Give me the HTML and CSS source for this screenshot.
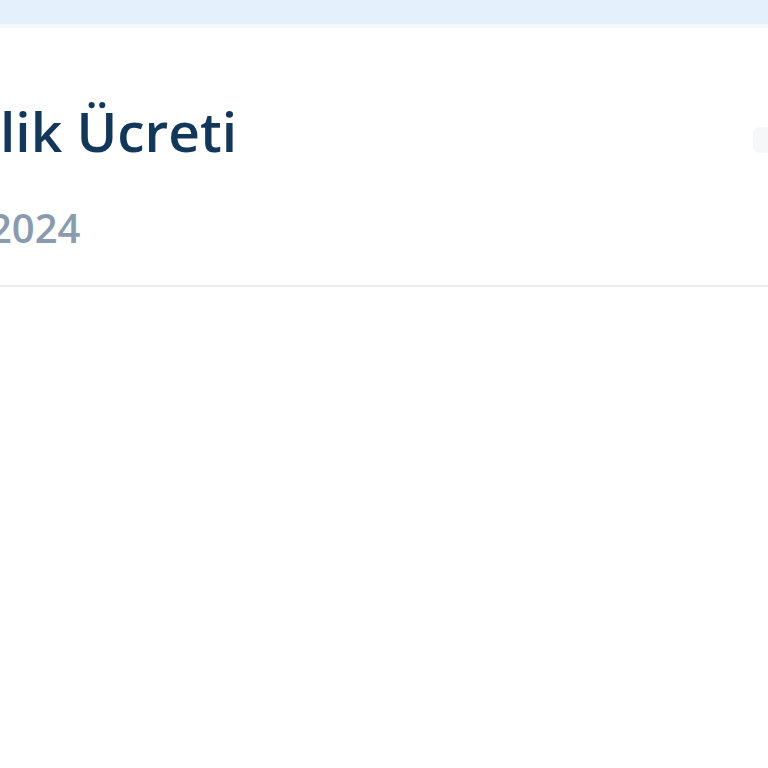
FILE: index.html
```html
<!DOCTYPE html>
<html lang="tr">
<head>
   <meta charset="UTF-8">
   <meta name="viewport" content="width=device-width, initial-scale=1.0">
   <title>Ücret</title>
   <link rel="stylesheet" href="styles.css">
</head>
<body>
   <div class="topbar"></div>
   <div class="card">
      <div class="card-head">
         <h1 class="title">lik Ücreti</h1>
         <span class="chip"></span>
      </div>
      <div class="date">2024</div>
   </div>
</body>
</html>
```

FILE: styles.css
```css
*{
   margin: 0;
   padding: 0;
   box-sizing: border-box;
}
body{
   background: #fff;
   font-family: "Open Sans", "Noto Sans", sans-serif;
}
.topbar{
   height: 24px;
   background: #e4f1fd;
   border-bottom: 4px solid #f5f9fd;
   box-sizing: content-box;
}
.card{
   background: #fff;
   padding: 75px 0 37px 0;
   border-bottom: 2px solid #ecebf3;
   box-shadow: 0 1px 2px rgba(200, 198, 225, 0.35);
}
.card-head{
   display: flex;
   align-items: flex-start;
   justify-content: space-between;
}
.title{
   font-size: 55px;
   line-height: 1;
   font-weight: 600;
   color: #13375b;
}
.chip{
   width: 15px;
   height: 26px;
   margin-top: 24px;
   background: #f6f7f9;
   border-radius: 6px 0 0 6px;
}
/* year runs off the left edge, only the tail shows */
.date{
   margin: 50px 0 0 -11px;
   font-size: 40px;
   line-height: 1;
   font-weight: 600;
   color: #8b9bae;
}
```
